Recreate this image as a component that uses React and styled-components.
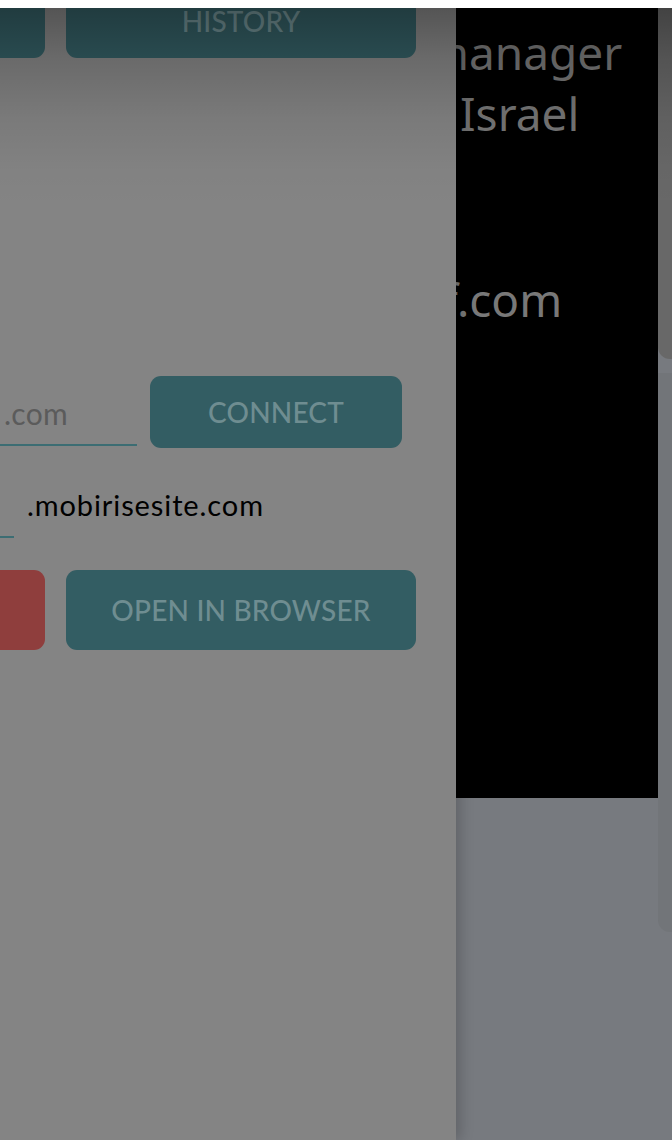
import React from 'react';
import styled, { createGlobalStyle } from 'styled-components';

const GlobalStyle = createGlobalStyle`
  html, body {
    margin: 0;
    padding: 0;
    background: #ffffff;
  }
  body {
    font-family: "Lato", "Liberation Sans", sans-serif;
  }
`;

const Page = styled.div`
  padding-top: 8px;
  width: 672px;
  height: 1140px;
  box-sizing: border-box;
  overflow: hidden;
`;

const Stage = styled.div`
  position: relative;
  display: flex;
  height: 1132px;
  overflow: hidden;
`;

// dark fade across the top of the screen
const TopShade = styled.div`
  position: absolute;
  left: 0;
  top: 0;
  width: 100%;
  height: 200px;
  background: linear-gradient(
    to bottom,
    rgba(0, 0, 0, 0.36) 0px,
    rgba(0, 0, 0, 0.2) 50px,
    rgba(0, 0, 0, 0.08) 110px,
    rgba(0, 0, 0, 0.02) 160px,
    rgba(0, 0, 0, 0) 200px
  );
  pointer-events: none;
  z-index: 3;
`;

const Panel = styled.aside`
  position: relative;
  z-index: 2;
  flex: 0 0 456px;
  background: #848484;
  overflow: hidden;
  box-shadow: 5px 0 12px rgba(0, 0, 0, 0.18);
`;

const PanelInner = styled.div`
  width: 721px;
  margin-left: -305px;
  margin-top: -24px;
  display: flex;
  flex-direction: column;
`;

const ButtonGrid = styled.div`
  display: grid;
  grid-template-columns: 350px 350px;
  column-gap: 21px;
  margin-top: ${(p) => p.$top || 0}px;
`;

const Button = styled.button`
  height: ${(p) => p.$h || 80}px;
  width: ${(p) => (p.$w ? `${p.$w}px` : 'auto')};
  border: none;
  border-radius: 11px;
  background: ${(p) => (p.$danger ? '#8f3e3d' : '#335d63')};
  color: #6f8d91;
  font-family: "Lato", "Liberation Sans", sans-serif;
  font-size: 28px;
  font-weight: 500;
  letter-spacing: 0.2px;
  text-transform: uppercase;
  padding: 0;
  cursor: pointer;
  flex-shrink: 0;
`;

const FieldRow = styled.div`
  display: flex;
  align-items: flex-start;
  gap: 13px;
  margin-top: ${(p) => p.$top || 0}px;
`;

const Field = styled.div`
  width: ${(p) => p.$w}px;
  height: 70px;
  box-sizing: border-box;
  border-bottom: 2px solid #3c6d73;
  display: flex;
  align-items: center;
  justify-content: flex-end;
  padding-right: ${(p) => p.$pr || 0}px;
  padding-top: 6px;
  flex-shrink: 0;
`;

const FieldText = styled.span`
  font-family: "Lato", "Liberation Sans", sans-serif;
  font-size: 30px;
  color: #5b5b5b;
  letter-spacing: 0.3px;
`;

const Suffix = styled.span`
  font-family: "Lato", "Liberation Sans", sans-serif;
  font-size: 29px;
  line-height: 70px;
  padding-top: 2px;
  letter-spacing: 0.9px;
  color: #000000;
`;

const Backdrop = styled.main`
  flex: 1;
  display: flex;
  align-items: flex-start;
  background: #777a7f;
  overflow: hidden;
`;

const BlackCard = styled.section`
  flex: 0 0 202px;
  height: 790px;
  background: #000000;
  overflow: hidden;
  box-sizing: border-box;
  padding-top: 14px;
`;

const CardText = styled.div`
  margin-left: -30px;
  width: 400px;
  font-family: "Noto Sans", "Open Sans", sans-serif;
  font-size: 46px;
  line-height: 61px;
  color: #787878;
  white-space: nowrap;
`;

const CardLine = styled.div`
  padding-left: ${(p) => p.$indent || 0}px;
  height: ${(p) => p.$h || 61}px;
`;

const SideColumn = styled.div`
  flex: 1;
  display: flex;
  flex-direction: column;
  gap: 14px;
`;

const SideCard = styled.div`
  height: ${(p) => p.$h}px;
  background: ${(p) => p.$bg};
  border-bottom-left-radius: 12px;
`;

export default function App() {
  return (
    <>
      <GlobalStyle />
      <Page>
        <Stage>
          <TopShade />
          <Panel>
            <PanelInner>
              <ButtonGrid>
                <Button $h={74}>Save</Button>
                <Button $h={74}>History</Button>
              </ButtonGrid>

              <FieldRow $top={318}>
                <Field $w={442} $pr={69}>
                  <FieldText>.com</FieldText>
                </Field>
                <Button $w={252} $h={72}>Connect</Button>
              </FieldRow>

              <FieldRow $top={20}>
                <Field $w={319} />
                <Suffix>.mobirisesite.com</Suffix>
              </FieldRow>

              <ButtonGrid $top={30}>
                <Button $danger>Delete</Button>
                <Button>Open in browser</Button>
              </ButtonGrid>
            </PanelInner>
          </Panel>

          <Backdrop>
            <BlackCard>
              <CardText>
                <CardLine>manager</CardLine>
                <CardLine $indent={34}>Israel</CardLine>
                <CardLine />
                <CardLine $h={64} />
                <CardLine $indent={16}>f.com</CardLine>
              </CardText>
            </BlackCard>
            <SideColumn>
              <SideCard $h={351} $bg="#686868" />
              <SideCard $h={559} $bg="#727579" />
            </SideColumn>
          </Backdrop>
        </Stage>
      </Page>
    </>
  );
}
